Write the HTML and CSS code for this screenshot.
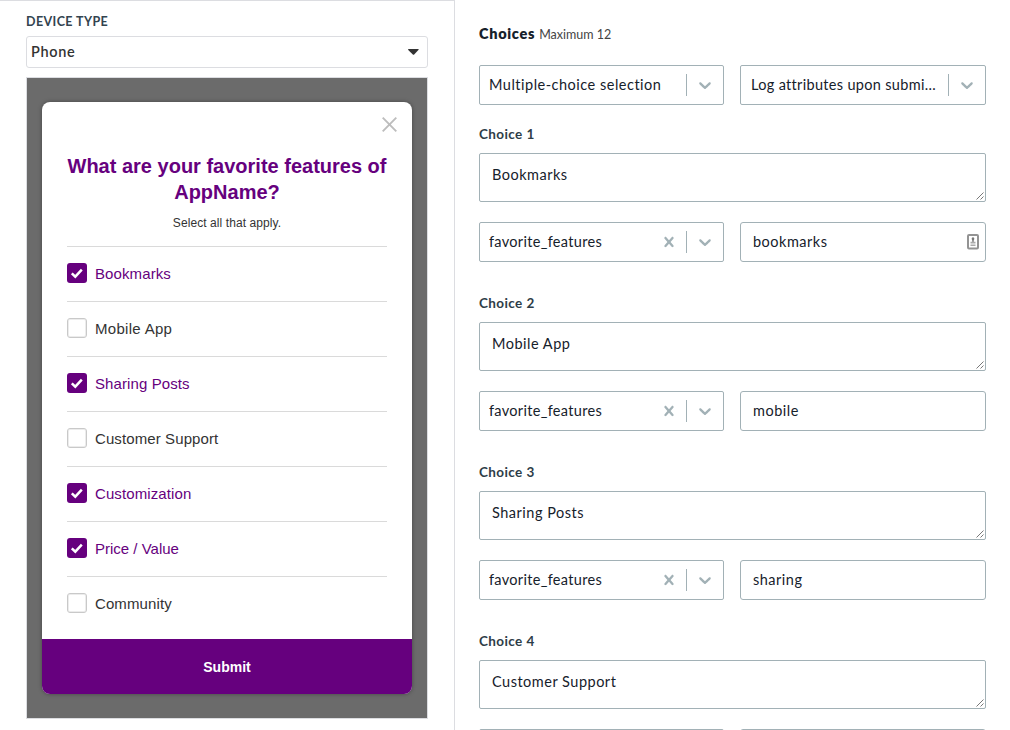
FILE: index.html
```html
<!DOCTYPE html>
<html lang="en">
<head>
<meta charset="utf-8">
<title>Survey editor</title>
<link rel="stylesheet" href="styles.css">
</head>
<body>
<svg class="defs" width="0" height="0" aria-hidden="true">
  <symbol id="chevron" viewBox="0 0 20 20"><path d="M4.516 7.548c0.436-0.446 1.043-0.481 1.576 0l3.908 3.747 3.908-3.747c0.533-0.481 1.141-0.446 1.574 0 0.436 0.445 0.408 1.197 0 1.615-0.406 0.418-4.695 4.502-4.695 4.502-0.217 0.223-0.502 0.335-0.787 0.335s-0.57-0.112-0.789-0.335c0 0-4.287-4.084-4.695-4.502s-0.436-1.17 0-1.615z"/></symbol>
  <symbol id="clear" viewBox="0 0 20 20"><path d="M14.348 14.849c-0.469 0.469-1.229 0.469-1.697 0l-2.651-3.030-2.651 3.029c-0.469 0.469-1.229 0.469-1.697 0-0.469-0.469-0.469-1.229 0-1.697l2.758-3.15-2.759-3.152c-0.469-0.469-0.469-1.228 0-1.697s1.228-0.469 1.697 0l2.652 3.031 2.651-3.031c0.469-0.469 1.228-0.469 1.697 0s0.469 1.229 0 1.697l-2.758 3.152 2.758 3.15c0.469 0.469 0.469 1.229 0 1.698z"/></symbol>
  <symbol id="grip" viewBox="0 0 8 8"><path d="M.5 7.5l7-7M4.500 7.500l3-3" fill="none" stroke="#555" stroke-width=".8"/></symbol>
  <symbol id="check" viewBox="0 0 20 20"><path d="M4.800 10.300l3.500 3.400 6.500-7" fill="none" stroke="#fff" stroke-width="2.500"/></symbol>
</svg>
<div class="app">
  <section class="preview">
    <div class="label">DEVICE TYPE</div>
    <div class="device-select"><span class="device-name">Phone</span><svg width="11" height="6" viewBox="0 0 11 6"><path d="M0 .8Q0 0 .8 0H10.200Q11 0 10.600 .8L6.200 5.500Q5.500 6 4.800 5.500Z" fill="#333"/></svg></div>
    <div class="stage">
      <div class="modal">
        <div class="content">
          <div class="close"><svg width="15" height="15" viewBox="0 0 15 15"><path d="M.7.7l13.600 13.600M14.300.7L.7 14.300" stroke="#bdbdbd" stroke-width="1.900"/></svg></div>
          <h1 class="title">What are your favorite features of<br>AppName?</h1>
          <p class="help">Select all that apply.</p>
          <ul class="options">
            <li class="option on"><span class="box"><svg width="20" height="20"><use href="#check"/></svg></span><span>Bookmarks</span></li>
            <li class="option"><span class="box"></span><span class="wide">Mobile App</span></li>
            <li class="option on"><span class="box"><svg width="20" height="20"><use href="#check"/></svg></span><span>Sharing Posts</span></li>
            <li class="option"><span class="box"></span><span>Customer Support</span></li>
            <li class="option on"><span class="box"><svg width="20" height="20"><use href="#check"/></svg></span><span>Customization</span></li>
            <li class="option on"><span class="box"><svg width="20" height="20"><use href="#check"/></svg></span><span class="slim">Price / Value</span></li>
            <li class="option"><span class="box"></span><span>Community</span></li>
          </ul>
        </div>
        <div class="submit"><span>Submit</span></div>
      </div>
    </div>
  </section>
  <section class="editor">
    <div class="heading"><strong>Choices</strong><span class="max">Maximum 12</span></div>
    <div class="pair">
      <div class="select"><span class="value">Multiple-choice selection</span><i class="sep"></i><span class="ind"><svg width="20" height="20"><use href="#chevron"/></svg></span></div>
      <div class="select"><span class="value tight">Log attributes upon submi...</span><i class="sep"></i><span class="ind"><svg width="20" height="20"><use href="#chevron"/></svg></span></div>
    </div>
    <div class="choice">
      <div class="choice-label">Choice 1</div>
      <div class="area"><span>Bookmarks</span><svg class="grip" width="8" height="8"><use href="#grip"/></svg></div>
      <div class="pair">
        <div class="select"><span class="value tight">favorite_features</span><span class="ind clear"><svg width="20" height="20"><use href="#clear"/></svg></span><i class="sep"></i><span class="ind"><svg width="20" height="20"><use href="#chevron"/></svg></span></div>
        <div class="input"><span>bookmarks</span><svg width="12" height="16" viewBox="0 0 12 16"><rect x="1" y="1" width="10" height="13.500" rx="1" fill="#fff" stroke="#939393" stroke-width="2"/><path d="M6 3.200c1 0 1.300.8 1.300 1.600S6.800 6 6.700 6.700V8H5.300V6.700C5.200 6 4.700 5.600 4.700 4.800S5 3.200 6 3.200Z" fill="#777"/><path d="M3.500 7.800h5v1.800h-5zM3.500 10.500h5v1.500h-5z" fill="#aaa"/></svg></div>
      </div>
    </div>
    <div class="choice">
      <div class="choice-label">Choice 2</div>
      <div class="area"><span>Mobile App</span><svg class="grip" width="8" height="8"><use href="#grip"/></svg></div>
      <div class="pair">
        <div class="select"><span class="value tight">favorite_features</span><span class="ind clear"><svg width="20" height="20"><use href="#clear"/></svg></span><i class="sep"></i><span class="ind"><svg width="20" height="20"><use href="#chevron"/></svg></span></div>
        <div class="input"><span>mobile</span></div>
      </div>
    </div>
    <div class="choice">
      <div class="choice-label">Choice 3</div>
      <div class="area"><span>Sharing Posts</span><svg class="grip" width="8" height="8"><use href="#grip"/></svg></div>
      <div class="pair">
        <div class="select"><span class="value tight">favorite_features</span><span class="ind clear"><svg width="20" height="20"><use href="#clear"/></svg></span><i class="sep"></i><span class="ind"><svg width="20" height="20"><use href="#chevron"/></svg></span></div>
        <div class="input"><span>sharing</span></div>
      </div>
    </div>
    <div class="choice">
      <div class="choice-label">Choice 4</div>
      <div class="area"><span>Customer Support</span><svg class="grip" width="8" height="8"><use href="#grip"/></svg></div>
      <div class="pair">
        <div class="select"></div>
        <div class="input"></div>
      </div>
    </div>
  </section>
</div>
</body>
</html>
```
FILE: styles.css
```css
* { box-sizing: border-box; }
body { margin: 0; background: #fff; font-family: Lato, "Open Sans", sans-serif; color: #16212b; overflow: hidden; }
svg { display: block; flex: none; }
.defs { position: absolute; }
.app { display: flex; width: 1010px; height: 730px; overflow: hidden; }

.preview { flex: none; width: 455px; padding: 13px 26px 0; border-top: 1px solid #dcdde1; border-right: 1px solid #dcdde1; }
.label { height: 16px; line-height: 16px; font-size: 12.5px; font-weight: 700; letter-spacing: .4px; color: #33444f; }
.device-select { display: flex; align-items: center; justify-content: space-between; width: 402px; height: 32px; margin-top: 6px; padding: 0 8px 0 4px; border: 1px solid #dcdde1; border-radius: 3px; }
.device-name { padding-bottom: 2px; font-size: 14.5px; font-weight: 600; letter-spacing: .65px; color: #333; }
.stage { width: 402px; height: 642px; margin-top: 9px; padding: 24px 15px; border: 1px solid #dcdde1; background: #6b6b6b; }
.modal { width: 370px; height: 592px; margin-left: -1px; border-radius: 8px; overflow: hidden; background: #fff; box-shadow: 0 0 4px rgba(0,0,0,.35); font-family: "Liberation Sans", Arial, sans-serif; color: #333; }
.stage .modal { margin-left: 0; }
.content { height: 537px; padding: 15px 25px 0; }
.close { display: flex; justify-content: flex-end; height: 36px; margin-right: -10px; }
.title { margin: 0 -4px; text-align: center; font-size: 20px; line-height: 26px; font-weight: 700; color: #66007e; white-space: nowrap; }
.help { margin: 9px 0 0; height: 32px; line-height: 18px; text-align: center; font-size: 12px; letter-spacing: .08px; }
.options { margin: 0; padding: 0; list-style: none; }
.option { display: flex; align-items: center; gap: 8px; height: 55px; padding-bottom: 2px; border-top: 1px solid #dadada; font-size: 15px; letter-spacing: .1px; }
.wide { letter-spacing: .3px; }
.slim { letter-spacing: 0; }
.option.on { color: #66007e; }
.box { width: 20px; height: 20px; border: 1px solid #c9c9c9; box-shadow: inset 0 0 0 1px #ececec; border-radius: 3px; }
.on .box { border: 0; box-shadow: none; background: #66007e; }
.submit { display: flex; align-items: center; justify-content: center; height: 55px; background: #66007e; color: #fff; font-size: 14px; font-weight: 700; }

.editor { flex: none; width: 555px; padding: 24px 24px 0; }
.heading { display: flex; align-items: baseline; gap: 4px; height: 41px; line-height: 20px; font-size: 14.5px; letter-spacing: .7px; }
.heading strong { font-weight: 800; }
.max { font-size: 12.5px; letter-spacing: 0; color: #444; }
.pair { display: grid; grid-template-columns: 245px 246px; gap: 16px; }
.select, .input { display: flex; align-items: center; height: 40px; border: 1px solid #a2b1b6; border-radius: 2px; font-size: 14.5px; letter-spacing: .5px; }
.select { padding-left: 9px; color: #16212b; }
.value { flex: 1; padding-bottom: 1px; white-space: nowrap; }
.value.tight { letter-spacing: .32px; }
.select:nth-child(2) { padding-left: 10px; }
.sep { width: 1px; height: 22px; background: #a2b1b6; }
.ind { display: flex; align-items: center; justify-content: center; width: 36px; height: 38px; fill: #a2b1b6; }
.ind.clear { width: 34px; }
.input { justify-content: space-between; padding: 0 6px 0 12px; border-radius: 3px; }
.input span { padding-bottom: 1px; }
.choice { margin-top: 20px; height: 149px; }
.choice-label { height: 28px; line-height: 19px; font-size: 13.500px; font-weight: 700; letter-spacing: .4px; color: #2e3d48; }
.area { display: flex; justify-content: space-between; height: 49px; margin-bottom: 20px; padding: 11px 1px 1px 12px; border: 1px solid #a2b1b6; border-radius: 2px; font-size: 14.5px; line-height: 20px; letter-spacing: .5px; }
.grip { align-self: flex-end; }
```
